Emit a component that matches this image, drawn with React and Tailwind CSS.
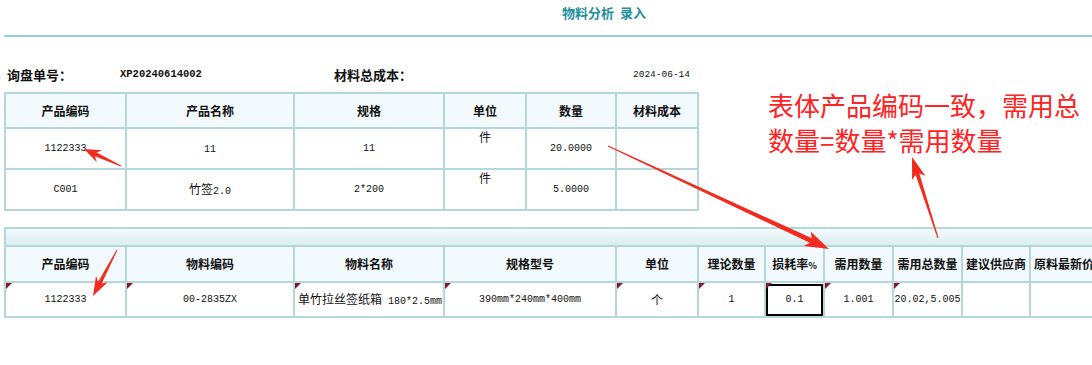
import React from "react";

const CN = { fontFamily: '"Noto Sans CJK SC", "Noto Sans", sans-serif' };
const MONO = { fontFamily: '"Liberation Mono", "DejaVu Sans Mono", "Noto Sans CJK SC", monospace' };

// tapered red arrow, thin at the tail and wide at the head
function arrowPoints(x1, y1, x2, y2, { tail = 1, shaft = 5, headLen = 22, headW = 16 } = {}) {
  const dx = x2 - x1;
  const dy = y2 - y1;
  const len = Math.hypot(dx, dy);
  const ux = dx / len;
  const uy = dy / len;
  const nx = -uy;
  const ny = ux;
  const bx = x2 - ux * headLen;
  const by = y2 - uy * headLen;
  const nb = x2 - ux * (headLen - 4);
  const nby = y2 - uy * (headLen - 4);
  const pts = [
    [x1 + (nx * tail) / 2, y1 + (ny * tail) / 2],
    [nb + (nx * shaft) / 2, nby + (ny * shaft) / 2],
    [bx + (nx * headW) / 2, by + (ny * headW) / 2],
    [x2, y2],
    [bx - (nx * headW) / 2, by - (ny * headW) / 2],
    [nb - (nx * shaft) / 2, nby - (ny * shaft) / 2],
    [x1 - (nx * tail) / 2, y1 - (ny * tail) / 2],
  ];
  return pts.map((p) => p.map((v) => v.toFixed(1)).join(",")).join(" ");
}

const arrows = [
  { from: [121, 166], to: [84, 149], opt: { shaft: 4, headLen: 17, headW: 13 } },
  { from: [117, 250], to: [93, 296], opt: { shaft: 4, headLen: 19, headW: 13 } },
  { from: [608, 146], to: [829, 249], opt: { shaft: 5, headLen: 24, headW: 16 } },
  { from: [938, 238], to: [912, 157], opt: { shaft: 4, headLen: 22, headW: 14 } },
];

const top = [
  { code: "1122333", name: "11", spec: "11", unit: "件", qty: "20.0000" },
  { code: "C001", name: "竹签", nameNum: "2.0", spec: "2*200", unit: "件", qty: "5.0000" },
];

const cols2 = [
  { w: 121, h: "产品编码" },
  { w: 168, h: "物料编码" },
  { w: 150, h: "物料名称" },
  { w: 172, h: "规格型号" },
  { w: 82, h: "单位" },
  { w: 67, h: "理论数量" },
  { w: 59, h: "损耗率%" },
  { w: 69, h: "需用数量" },
  { w: 69, h: "需用总数量" },
  { w: 68, h: "建议供应商" },
  { w: 68, h: "原料最新价" },
];

function Mark() {
  return (
    <span className="absolute left-0 top-0 w-0 h-0 border-t-[6px] border-t-[#8a1620] border-r-[6px] border-r-transparent" />
  );
}

export default function App() {
  const td = "border-2 border-[#b3d7dd] p-0";
  return (
    <div className="relative w-[1092px] h-[365px] bg-white overflow-hidden text-[#111]" style={CN}>
      {/* title */}
      <div className="h-[35px] pl-[562px] pt-[4px] text-[13px] font-bold text-[#1f8fa0] leading-[18px]">
        物料分析&nbsp;&nbsp;录入
      </div>
      <div className="ml-[4px] h-[2px] bg-[#93d0da]" />

      {/* info row */}
      <div className="flex items-center h-[55px] pt-[20px] leading-none">
        <div className="w-[120px] pl-[7px] text-[13px] font-bold">询盘单号：</div>
        <div className="w-[214px] text-[10.5px] font-bold" style={MONO}>XP20240614002</div>
        <div className="w-[299px] text-[13px] font-bold">材料总成本：</div>
        <div className="text-[9.5px]" style={MONO}>2024-06-14</div>
      </div>

      {/* product table */}
      <table className="ml-[4px] border-collapse table-fixed w-[693px]">
        <colgroup>
          {[121, 168, 150, 82, 90, 82].map((w, i) => (
            <col key={i} style={{ width: w }} />
          ))}
        </colgroup>
        <thead>
          <tr className="h-[35px] bg-[#f2fafd]">
            {["产品编码", "产品名称", "规格", "单位", "数量", "材料成本"].map((h) => (
              <th key={h} className={`${td} text-[12px] font-bold text-center`}>
                {h}
              </th>
            ))}
          </tr>
        </thead>
        <tbody>
          {top.map((r) => (
            <tr key={r.code} className="h-[41px] text-center">
              <td className={`${td} text-[10px]`} style={MONO}>{r.code}</td>
              <td className={`${td} text-[10px]`}>
                {r.nameNum ? (
                  <>
                    <span className="text-[12px]" style={CN}>{r.name}</span>
                    <span style={MONO}>{r.nameNum}</span>
                  </>
                ) : (
                  <span style={MONO}>{r.name}</span>
                )}
              </td>
              <td className={`${td} text-[10px]`} style={MONO}>{r.spec}</td>
              <td className={`${td} align-top pt-[1px] text-[12px] leading-[14px]`}>{r.unit}</td>
              <td className={`${td} text-[10px]`} style={MONO}>{r.qty}</td>
              <td className={td} />
            </tr>
          ))}
        </tbody>
      </table>

      {/* material table */}
      <div className="mt-[16px] ml-[4px] w-[1120px]">
        <div className="h-[18px] border-2 border-b-0 border-[#b3d7dd] bg-gradient-to-b from-[#f5fbfc] to-[#d9edf1]" />
        <table className="border-collapse table-fixed w-[1045px]">
          <colgroup>
            {cols2.map((c, i) => (
              <col key={i} style={{ width: c.w }} />
            ))}
          </colgroup>
          <thead>
            <tr className="h-[36px] bg-[#f2fafd]">
              {cols2.map((c) => (
                <th key={c.h} className={`${td} text-[12px] font-bold text-center whitespace-nowrap overflow-hidden`}>
                  {c.h === "损耗率%" ? (
                    <>
                      损耗率<span className="text-[9px]">%</span>
                    </>
                  ) : (
                    c.h
                  )}
                </th>
              ))}
            </tr>
          </thead>
          <tbody>
            <tr className="h-[35px] text-center text-[10px]">
              <td className={`${td} relative`} style={MONO}><Mark />1122333</td>
              <td className={`${td} relative`} style={MONO}><Mark />00-2835ZX</td>
              <td className={`${td} relative text-left pl-[3px] whitespace-nowrap`}>
                <Mark />
                <span className="text-[12px]" style={CN}>单竹拉丝签纸箱</span>
                <span style={MONO}> 180*2.5mm</span>
              </td>
              <td className={`${td} relative`} style={MONO}><Mark />390mm*240mm*400mm</td>
              <td className={`${td} relative text-[12px]`}><Mark />个</td>
              <td className={`${td} relative`} style={MONO}><Mark />1</td>
              <td className={`${td} relative`}>
                <div className="h-[32px] border-2 border-black flex items-center justify-center" style={MONO}>
                  <Mark />0.1
                </div>
              </td>
              <td className={`${td} relative`} style={MONO}><Mark />1.001</td>
              <td className={`${td} relative whitespace-nowrap`} style={MONO}><Mark />20.02,5.005</td>
              <td className={td} />
              <td className={td} />
            </tr>
          </tbody>
        </table>
      </div>

      {/* annotation */}
      <div className="absolute left-[768px] top-[87px] text-[26px] leading-[35px] text-[#ff2222]">
        <div>表体产品编码一致，需用总</div>
        <div>数量=数量*需用数量</div>
      </div>

      <svg className="absolute inset-0 pointer-events-none" width="1092" height="365">
        {arrows.map((a, i) => (
          <polygon key={i} points={arrowPoints(...a.from, ...a.to, a.opt)} fill="#f42a1f" />
        ))}
      </svg>
    </div>
  );
}
